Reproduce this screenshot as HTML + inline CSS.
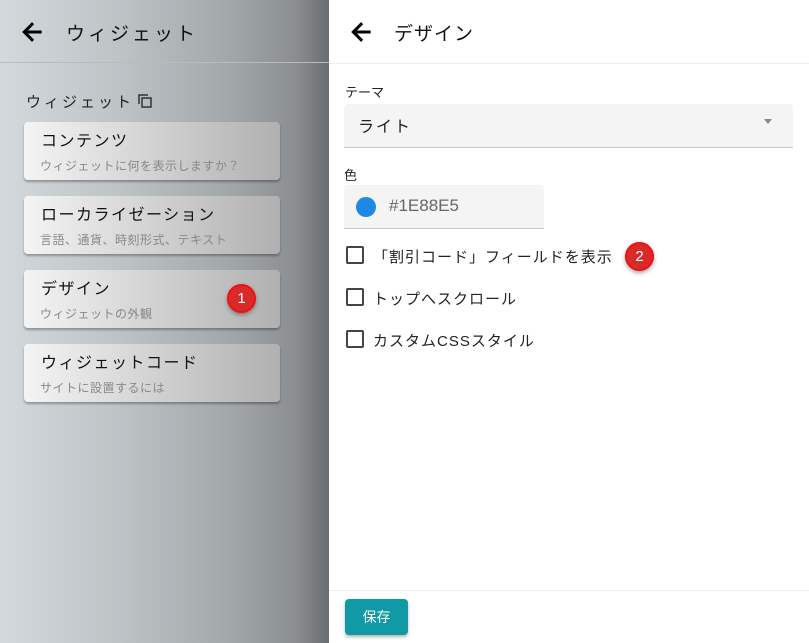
<!DOCTYPE html>
<html><head><meta charset="utf-8"><style>
*{box-sizing:border-box;margin:0;padding:0}
body{width:809px;height:643px;overflow:hidden;position:relative;font-family:"Liberation Sans","Noto Sans CJK JP",sans-serif;background:#fff}
#left{position:absolute;left:0;top:0;width:329px;height:643px;background:linear-gradient(90deg,#d3d9dc 0%,#bfc4c7 35%,#a2a7aa 70%,#8a8e90 90%,#6a6d6f 100%)}
#left .hd{position:absolute;left:0;top:0;width:329px;height:63px;border-bottom:1px solid #b8bcbe}
.ttl{position:absolute;font-size:19px;letter-spacing:3px;color:#111}
.card{position:absolute;left:24px;width:256px;height:58px;border-radius:4px;background:linear-gradient(90deg,#f4f4f4,#cfcfcf 55%,#b0b0b0);box-shadow:0 2px 2px rgba(0,0,0,.3)}
.card .t{position:absolute;left:17px;top:5px;font-size:16px;letter-spacing:1.5px;color:#111}
.card .s{position:absolute;left:16px;top:35px;font-size:12px;color:#888;letter-spacing:.5px}
.badge{position:absolute;width:29px;height:29px;border-radius:50%;background:#d92a2a;border:2px solid #f01010;color:#fff;font-size:15px;text-align:center;line-height:25px;box-shadow:0 2px 4px rgba(0,0,0,.35)}
#right{position:absolute;left:329px;top:0;width:480px;height:643px;background:#fff}
.lbl{position:absolute;font-size:13px;color:#222}
.cb{position:absolute;left:17px;width:18px;height:18px;border:2px solid #444;border-radius:2px}
.ct{position:absolute;left:44px;font-size:15px;color:#222;letter-spacing:1px}
</style></head><body>
<div id="left">
 <div class="hd">
  <svg style="position:absolute;left:18px;top:18px" width="28" height="28" viewBox="0 0 24 24"><path d="M20 11H7.8l5.6-5.6L12 4l-8 8 8 8 1.4-1.4L7.8 13H20z" fill="#000" stroke="#000" stroke-width=".6"/></svg>
  <div class="ttl" style="left:66px;top:19px">ウィジェット</div>
 </div>
 <div style="position:absolute;left:26px;top:91px;font-size:15px;letter-spacing:3px;color:#222">ウィジェット</div>
 <svg style="position:absolute;left:137px;top:93px" width="16" height="16" viewBox="0 0 16 16"><path d="M2 11V2h9" fill="none" stroke="#333" stroke-width="1.5"/><rect x="5" y="5" width="9" height="9" fill="none" stroke="#333" stroke-width="1.5"/></svg>
 <div class="card" style="top:122px"><div class="t">コンテンツ</div><div class="s">ウィジェットに何を表示しますか？</div></div>
 <div class="card" style="top:196px"><div class="t">ローカライゼーション</div><div class="s">言語、通貨、時刻形式、テキスト</div></div>
 <div class="card" style="top:270px"><div class="t">デザイン</div><div class="s">ウィジェットの外観</div></div>
 <div class="badge" style="left:227px;top:284px">1</div>
 <div class="card" style="top:344px"><div class="t">ウィジェットコード</div><div class="s">サイトに設置するには</div></div>
</div>
<div id="right">
 <div style="position:absolute;left:0;top:0;width:480px;height:64px;border-bottom:1px solid #eee"></div>
 <svg style="position:absolute;left:18px;top:18px" width="28" height="28" viewBox="0 0 24 24"><path d="M20 11H7.8l5.6-5.6L12 4l-8 8 8 8 1.4-1.4L7.8 13H20z" fill="#000" stroke="#000" stroke-width=".6"/></svg>
 <div style="position:absolute;left:65px;top:19px;font-size:19px;color:#111;letter-spacing:1px">デザイン</div>
 <div class="lbl" style="left:16px;top:82px">テーマ</div>
 <div style="position:absolute;left:15px;top:104px;width:449px;height:44px;background:#f4f4f4;border-bottom:1px solid #c8c8c8;border-radius:4px 4px 0 0"></div>
 <div style="position:absolute;left:29px;top:113px;font-size:16px;color:#222;letter-spacing:2px">ライト</div>
 <div style="position:absolute;left:435px;top:119px;width:0;height:0;border-left:4px solid transparent;border-right:4px solid transparent;border-top:5px solid #888"></div>
 <div class="lbl" style="left:15px;top:165px">色</div>
 <div style="position:absolute;left:15px;top:185px;width:200px;height:44px;background:#f4f4f4;border-bottom:1px solid #c8c8c8;border-radius:4px 4px 0 0"></div>
 <div style="position:absolute;left:27px;top:197px;width:20px;height:20px;border-radius:50%;background:#1e88e5"></div>
 <div style="position:absolute;left:60px;top:196px;font-size:17px;color:#666">#1E88E5</div>
 <div class="cb" style="top:246px"></div><div class="ct" style="top:246px">「割引コード」フィールドを表示</div>
 <div class="badge" style="left:296px;top:242px">2</div>
 <div class="cb" style="top:288px"></div><div class="ct" style="top:288px">トップへスクロール</div>
 <div class="cb" style="top:330px"></div><div class="ct" style="top:330px">カスタムCSSスタイル</div>
 <div style="position:absolute;left:0;top:590px;width:480px;border-top:1px solid #eee"></div>
 <div style="position:absolute;left:16px;top:599px;width:63px;height:36px;background:#0f9aa6;border-radius:4px;color:#fff;font-size:14px;text-align:center;line-height:36px;box-shadow:0 2px 3px rgba(0,0,0,.3)">保存</div>
</div>
</body></html>
